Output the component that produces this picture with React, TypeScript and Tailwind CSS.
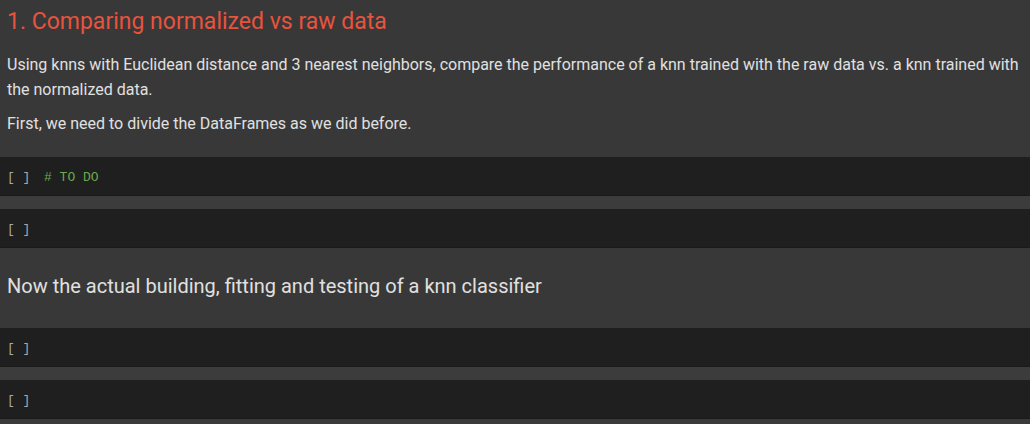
import React from "react";

function CodeCell({ children }: { children?: React.ReactNode }) {
  return (
    <div className="h-[39px] bg-[#1f1f1f] border-b border-b-[#1a1a1a] flex items-center pl-[7px] pt-[2px] font-['Liberation_Mono',monospace] text-[13px] leading-none">
      <span className="text-[#a8a8a8] w-[37px] whitespace-pre">[ ]</span>
      {children}
    </div>
  );
}

export default function App() {
  return (
    <div className="w-[1030px] h-[424px] overflow-hidden bg-[#3a3a3a] font-['Roboto',sans-serif]">
      <div className="bg-[#383838] px-[7px] pt-[7px] pb-[21px]">
        <h1 className="text-[23px] leading-[30px] text-[#e8533d] font-normal">
          1. Comparing normalized vs raw data
        </h1>
        <p className="mt-[15px] text-[16px] leading-[25px] text-[#e0e0e0]">
          Using knns with Euclidean distance and 3 nearest neighbors, compare the performance of a knn trained with the raw data vs. a knn trained with the normalized data.
        </p>
        <p className="mt-[9px] text-[16px] leading-[25px] text-[#e0e0e0]">
          First, we need to divide the DataFrames as we did before.
        </p>
      </div>
      <CodeCell>
        <span className="text-[#6aa84f]"># TO DO</span>
      </CodeCell>
      <div className="h-[13px] bg-[#3c3c3c]" />
      <CodeCell />
      <div className="bg-[#383838] h-[80px] px-[7px] pb-[4px] flex items-center">
        <p className="text-[20px] leading-[28px] text-[#e0e0e0]">
          Now the actual building, fitting and testing of a knn classifier
        </p>
      </div>
      <CodeCell />
      <div className="h-[13px] bg-[#3c3c3c]" />
      <CodeCell />
    </div>
  );
}
